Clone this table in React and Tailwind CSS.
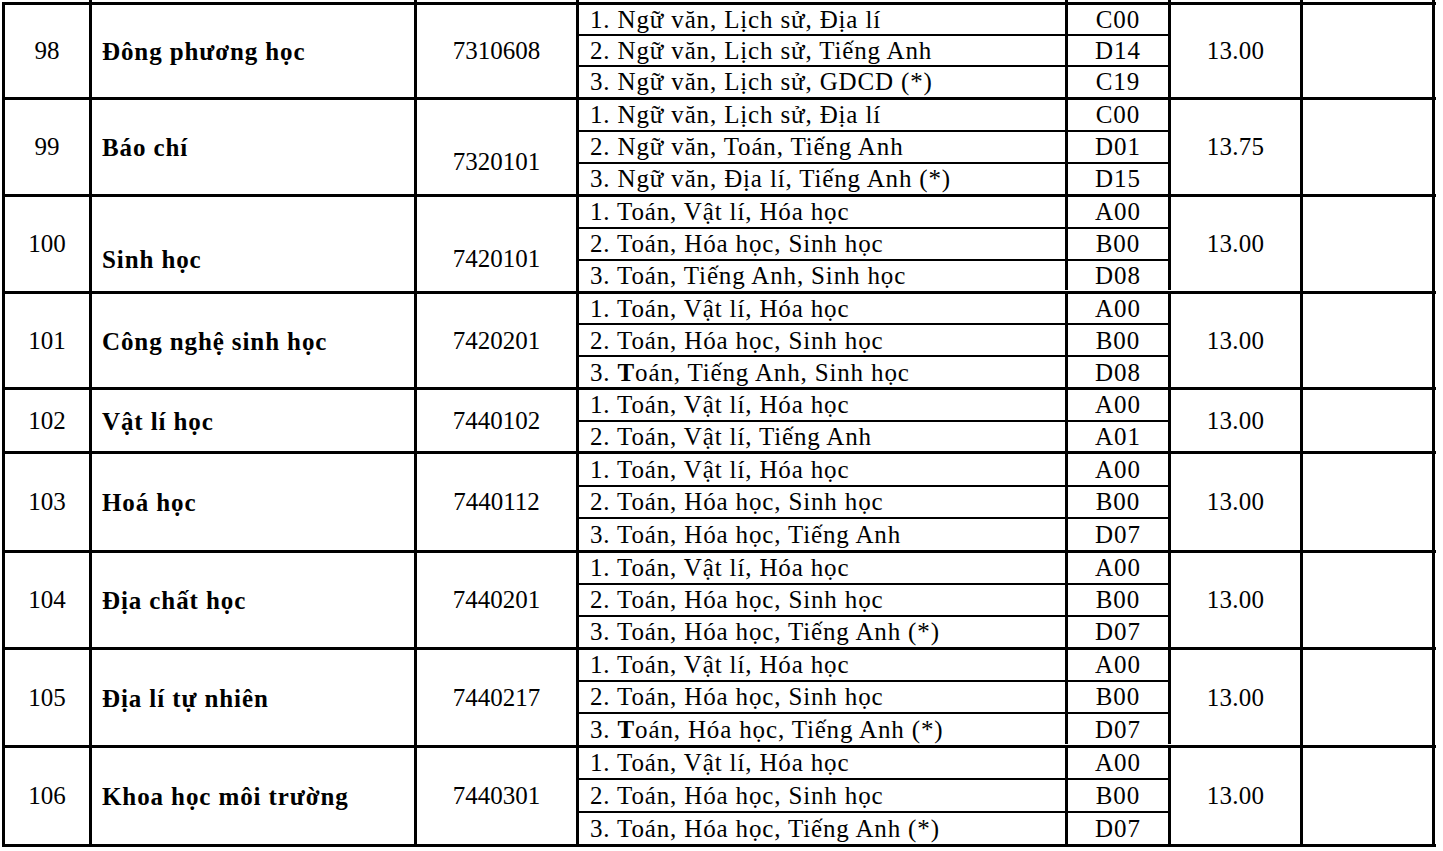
const combosNgu1 = [
  ['1. Ngữ văn, Lịch sử, Địa lí', 'C00'],
  ['2. Ngữ văn, Lịch sử, Tiếng Anh', 'D14'],
  ['3. Ngữ văn, Lịch sử, GDCD (*)', 'C19'],
];

const combosNgu2 = [
  ['1. Ngữ văn, Lịch sử, Địa lí', 'C00'],
  ['2. Ngữ văn, Toán, Tiếng Anh', 'D01'],
  ['3. Ngữ văn, Địa lí, Tiếng Anh (*)', 'D15'],
];

const combosSinh = [
  ['1. Toán, Vật lí, Hóa học', 'A00'],
  ['2. Toán, Hóa học, Sinh học', 'B00'],
  ['3. Toán, Tiếng Anh, Sinh học', 'D08'],
];

const combosHoa = [
  ['1. Toán, Vật lí, Hóa học', 'A00'],
  ['2. Toán, Hóa học, Sinh học', 'B00'],
  ['3. Toán, Hóa học, Tiếng Anh', 'D07'],
];

const combosHoaStar = [
  ['1. Toán, Vật lí, Hóa học', 'A00'],
  ['2. Toán, Hóa học, Sinh học', 'B00'],
  ['3. Toán, Hóa học, Tiếng Anh (*)', 'D07'],
];

// h = row height incl. its 3px bottom rule
const rows = [
  { no: '98', name: 'Đông phương học', code: '7310608', combos: combosNgu1, score: '13.00', h: 'h-[94.5px]' },
  { no: '99', name: 'Báo chí', code: '7320101', codeLow: true, combos: combosNgu2, score: '13.75', h: 'h-[97.5px]' },
  { no: '100', name: 'Sinh học', nameLow: true, code: '7420101', codeLow: true, combos: combosSinh, score: '13.00', h: 'h-[96.5px]' },
  { no: '101', name: 'Công nghệ sinh học', code: '7420201', combos: combosSinh, boldT: true, score: '13.00', h: 'h-[96.5px]' },
  {
    no: '102',
    name: 'Vật lí học',
    code: '7440102',
    combos: [
      ['1. Toán, Vật lí, Hóa học', 'A00'],
      ['2. Toán, Vật lí, Tiếng Anh', 'A01'],
    ],
    score: '13.00',
    h: 'h-[64px]',
  },
  { no: '103', name: 'Hoá học', code: '7440112', combos: combosHoa, score: '13.00', h: 'h-[98.5px]' },
  { no: '104', name: 'Địa chất học', code: '7440201', combos: combosHoaStar, score: '13.00', h: 'h-[97px]' },
  { no: '105', name: 'Địa lí tự nhiên', code: '7440217', combos: combosHoaStar, boldT: true, score: '13.00', h: 'h-[98px]' },
  { no: '106', name: 'Khoa học môi trường', code: '7440301', combos: combosHoaStar, score: '13.00', h: 'h-[99px]' },
];

function Subjects({ text, boldT }) {
  if (!boldT) return <span>{text}</span>;
  return (
    <span>
      {text.slice(0, 3)}
      <b>T</b>
      {text.slice(4)}
    </span>
  );
}

function Row({ row }) {
  const last = row.combos.length - 1;
  return (
    <div className={`flex border-b-[3px] border-black ${row.h}`}>
      <div className="w-[87px] shrink-0 border-r-[3px] border-black flex items-center justify-center">
        {row.no}
      </div>
      <div
        className={`w-[325px] shrink-0 border-r-[3px] border-black flex items-center pl-[10px] font-bold tracking-[0.9px] ${
          row.nameLow ? 'pt-[32px]' : 'pt-[2px]'
        }`}
      >
        {row.name}
      </div>
      <div
        className={`w-[162px] shrink-0 border-r-[3px] border-black flex items-center justify-center ${
          row.codeLow ? 'pt-[30px]' : ''
        }`}
      >
        {row.code}
      </div>
      <div className="w-[592px] shrink-0 flex flex-col">
        {row.combos.map(([subjects, combo], i) => (
          <div key={combo + i} className={`flex-1 flex ${i < last ? 'border-b-2 border-black' : ''}`}>
            <div className="w-[489px] shrink-0 border-r-[3px] border-black flex items-center pl-[11px] tracking-[0.85px]">
              <Subjects text={subjects} boldT={row.boldT && i === last} />
            </div>
            <div className="w-[103px] shrink-0 border-r-[3px] border-black flex items-center justify-center tracking-[1px]">
              {combo}
            </div>
          </div>
        ))}
      </div>
      <div className="w-[132px] shrink-0 border-r-[3px] border-black flex items-center justify-center tracking-[0.3px]">
        {row.score}
      </div>
      <div className="w-[132px] shrink-0 border-r-[3px] border-black" />
    </div>
  );
}

export default function App() {
  return (
    <div className="w-[1443px] h-[851px] bg-white overflow-hidden font-[family-name:'Liberation_Serif','Times_New_Roman',serif] text-[25px] leading-none text-black">
      {/* stubs of the row above */}
      <div className="flex h-[2px] ml-[5px]">
        <div className="w-[87px] border-r-[3px] border-black" />
        <div className="w-[325px] border-r-[3px] border-black" />
        <div className="w-[162px] border-r-[3px] border-black" />
        <div className="w-[489px] border-r-[3px] border-black" />
        <div className="w-[103px] border-r-[3px] border-black" />
        <div className="w-[132px] border-r-[3px] border-black" />
        <div className="w-[132px] border-r-[3px] border-black" />
      </div>
      <div className="ml-[2px] w-[1433.5px] border-t-[3px] border-l-[3px] border-black">
        {rows.map((row) => (
          <Row key={row.no} row={row} />
        ))}
      </div>
    </div>
  );
}
